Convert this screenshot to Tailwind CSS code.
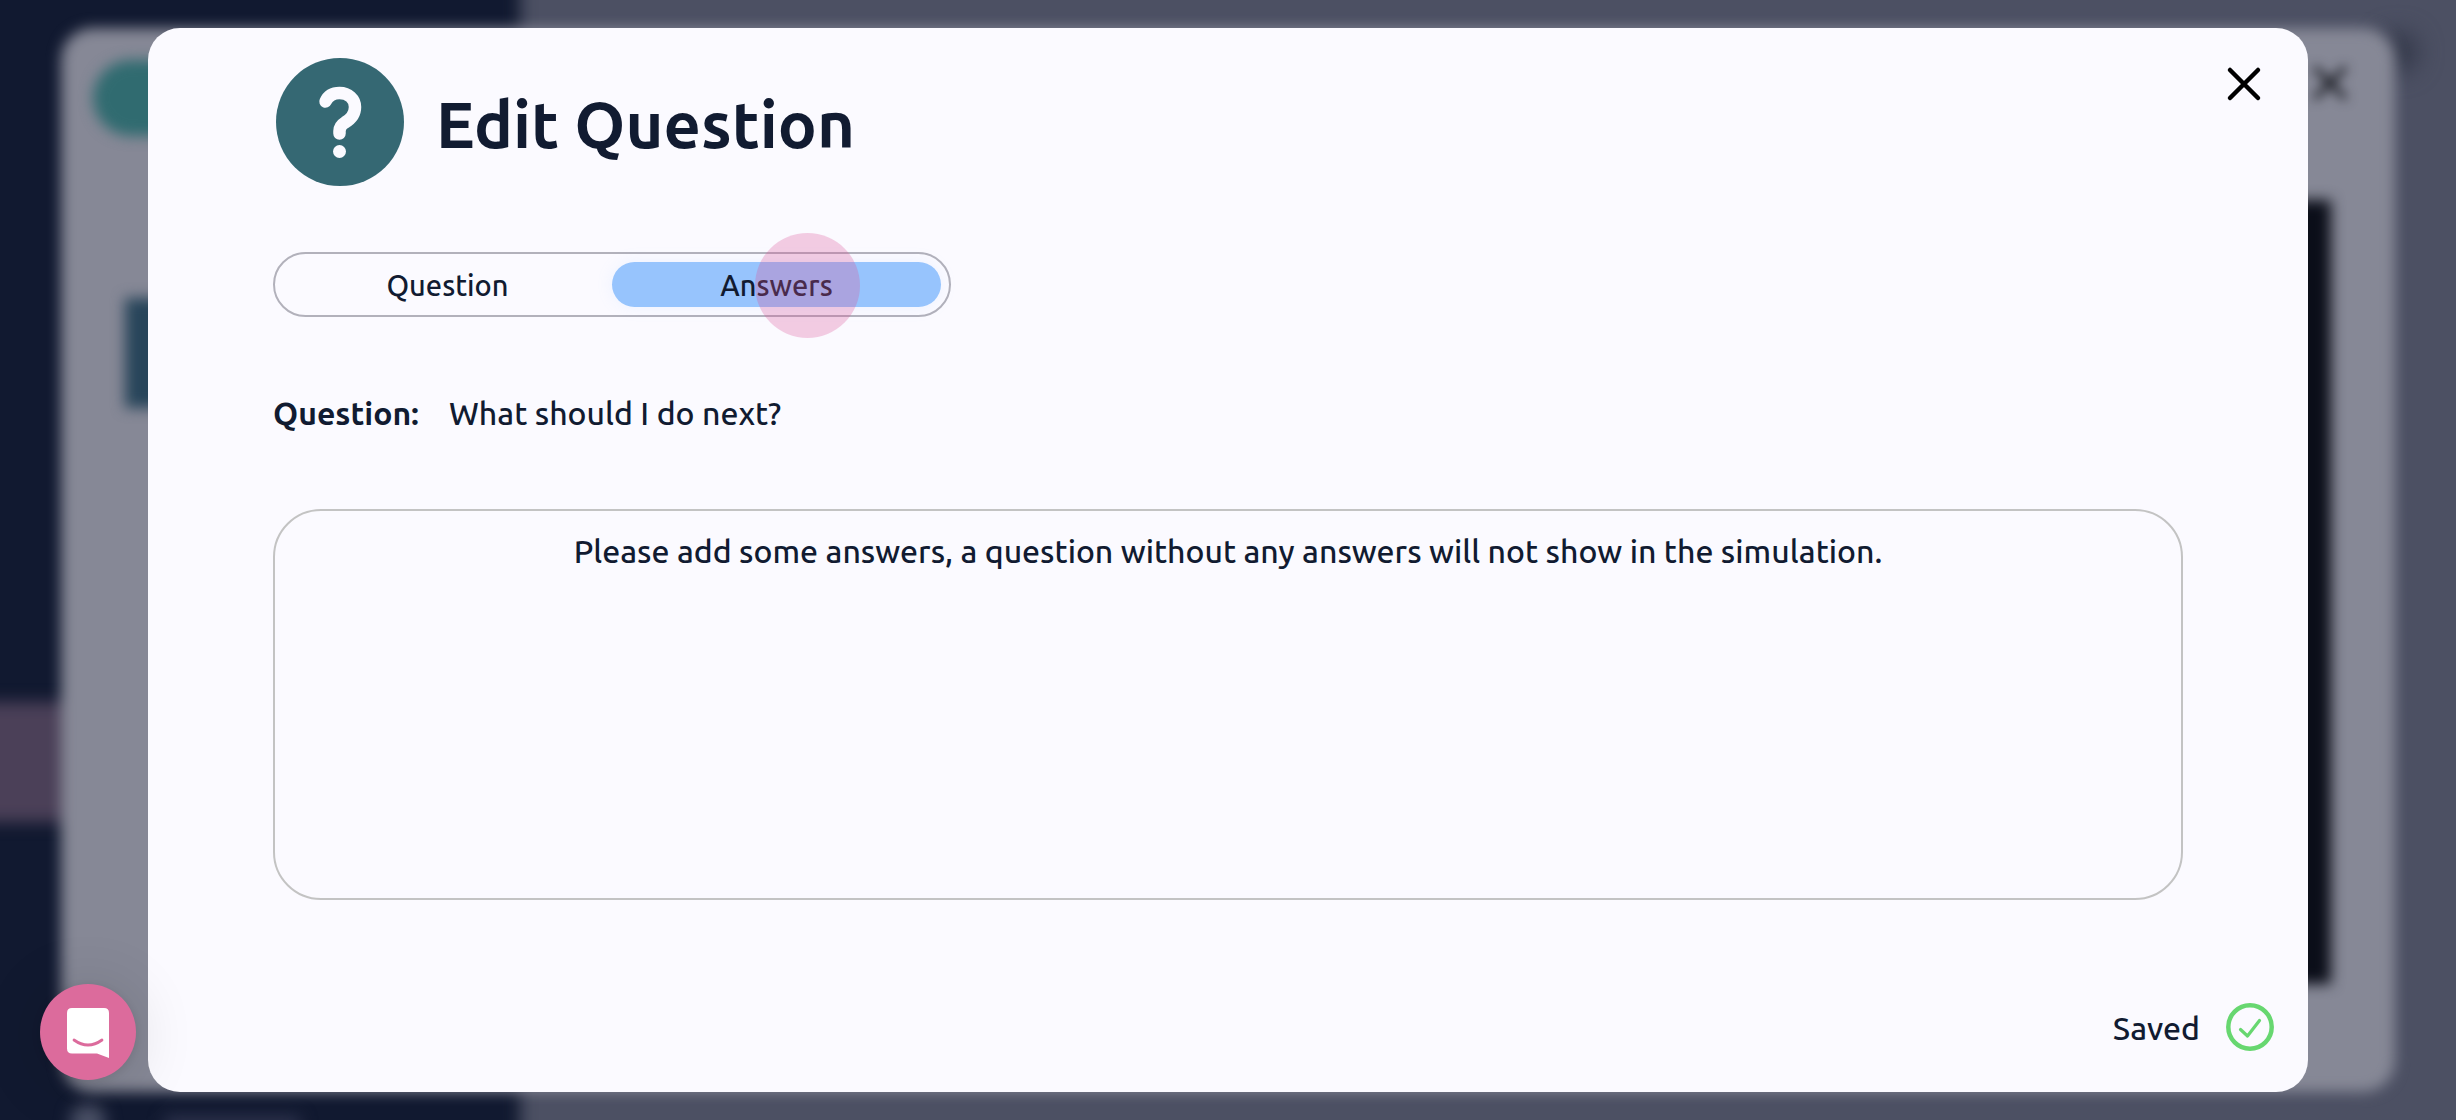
<!DOCTYPE html>
<html lang="en">
<head>
<meta charset="utf-8">
<meta name="viewport" content="width=device-width, initial-scale=1">
<title>Edit Question</title>
<script src="https://cdn.jsdelivr.net/npm/@tailwindcss/browser@4"></script>
</head>
<body class="relative h-screen overflow-hidden bg-[#4c5063] font-[Ubuntu,'Noto_Sans',sans-serif] text-[32px] leading-[40px] font-medium text-[#111b31]">

  <!-- Blurred page behind the dialog -->
  <div class="absolute inset-0" aria-hidden="true">
    <div class="absolute -inset-y-10 -left-10 w-[560px] bg-[#111930] blur-[8px]"></div>
    <div class="absolute -left-10 top-[702px] h-[120px] w-[560px] bg-[#4b4058] blur-[8px]"></div>
    <div class="absolute -bottom-5 left-[70px] size-9 rounded-full bg-[#4a5066] blur-[8px]"></div>
    <div class="absolute -bottom-4 left-[165px] h-5 w-[135px] bg-[#2d324c] blur-[8px]"></div>
    <div class="absolute right-[38px] top-[32px] size-10 rounded-full bg-[#333849] blur-[12px]"></div>
    <div class="absolute inset-x-[61px] inset-y-[28px] rounded-[32px] bg-[#868896] blur-[7px]"></div>
    <div class="absolute left-[93px] top-[60px] h-[76px] w-[200px] rounded-full bg-[#306b70] blur-[7px]"></div>
    <div class="absolute left-[125px] top-[298px] h-[110px] w-[200px] bg-[#28455a] blur-[7px]"></div>
    <div class="absolute right-[125px] top-[200px] bottom-[136px] w-[200px] bg-[#0b0e19] blur-[7px]"></div>
    <svg class="absolute right-[108px] top-[65px] size-9 blur-[6px]" viewBox="0 0 36 36" fill="none" stroke="#101218" stroke-width="5" stroke-linecap="round"><path d="M4 4l28 28M32 4L4 32"/></svg>
  </div>

  <main class="relative flex h-full px-[148px] py-[28px]">
    <section role="dialog" aria-labelledby="dialog-title" class="relative flex flex-1 flex-col rounded-[32px] bg-[#fbfaff] px-[125px] pt-[30px]">

      <button type="button" aria-label="Close" class="absolute right-[40px] top-[32px] flex size-12 items-center justify-center">
        <svg class="size-9" viewBox="0 0 36 36" fill="none" stroke="#000" stroke-width="4.500" stroke-linecap="round"><path d="M4 4l28 28M32 4L4 32"/></svg>
      </button>

      <header class="flex items-center gap-[32px] pl-[3px]">
        <svg class="size-32 shrink-0" viewBox="0 0 128 128" aria-hidden="true">
          <circle cx="64" cy="64" r="64" fill="#356873"/>
          <path d="M49.500 43.500C52 38 57 35 63.500 35C72.500 35 79 41 79 49C79 56 75 61 69 64.500C65 67 63.500 69.500 63.500 73V75.500" fill="none" stroke="#fbfaff" stroke-width="12.500" stroke-linecap="round" stroke-linejoin="round"/>
          <circle cx="63.500" cy="93.500" r="6.500" fill="#fbfaff"/>
        </svg>
        <h1 id="dialog-title" class="pt-1 text-[65px] leading-[80px] font-bold">Edit Question</h1>
      </header>

      <div role="tablist" class="relative mt-[66px] grid h-[65px] w-[678px] grid-cols-2 rounded-full border-2 border-[#b2b1bb] p-2 text-[29px] leading-[32px]">
        <button type="button" role="tab" aria-selected="false" class="rounded-full">Question</button>
        <button type="button" role="tab" aria-selected="true" class="rounded-full bg-[#97c4fd] shadow-[0_0_16px_rgba(151,196,253,0.15)]">Answers</button>
        <!-- Tap marker -->
        <span class="pointer-events-none absolute -top-[21px] left-[480px] size-[105px] rounded-full bg-[#db5297]/28"></span>
      </div>

      <dl class="mt-[76px] flex gap-[30px]">
        <dt class="font-bold">Question:</dt>
        <dd>What should I do next?</dd>
      </dl>

      <div class="mt-[76px] h-[391px] rounded-[48px] border-2 border-[#c3c3c3] px-8 pt-[20px] text-center">
        <p>Please add some answers, a question without any answers will not show in the simulation.</p>
      </div>

      <footer class="absolute right-[34px] bottom-[41px] flex items-center gap-[26px]">
        <span class="pt-[2px]">Saved</span>
        <svg class="size-12" viewBox="0 0 48 48" fill="none" stroke="#67d770" stroke-linecap="round" stroke-linejoin="round" aria-hidden="true">
          <circle cx="24" cy="24" r="21.700" stroke-width="4.500"/>
          <path d="M14.500 26.500L21.500 33L33.500 17.500" stroke-width="3.200"/>
        </svg>
      </footer>
    </section>
  </main>

  <button type="button" aria-label="Open chat" class="fixed bottom-10 left-10 flex size-24 items-center justify-center rounded-full bg-[#dc6b9c] shadow-[0_2px_12px_rgba(0,0,0,0.1),0_4px_64px_rgba(0,0,0,0.14)]">
    <svg class="h-[52px] w-[42px]" viewBox="0 0 42 52" aria-hidden="true">
      <path d="M5 2H37Q42 2 42 7V52L30 47.500H5Q0 47.500 0 42.500V7Q0 2 5 2Z" fill="#fff"/>
      <path d="M7 34Q21 44 35 34" fill="none" stroke="#dc6b9c" stroke-width="2.800" stroke-linecap="round"/>
    </svg>
  </button>
</body>
</html>
